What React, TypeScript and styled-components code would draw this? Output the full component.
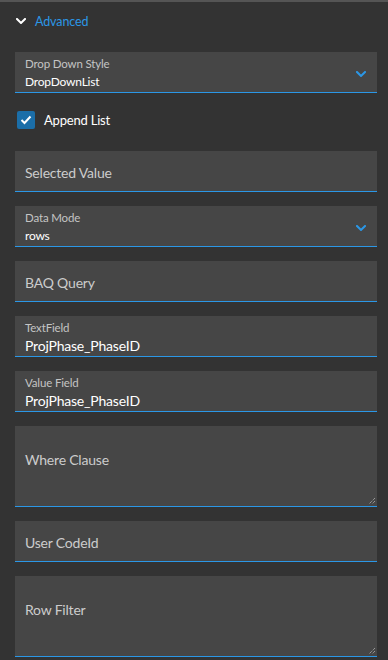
import styled, { createGlobalStyle } from "styled-components"

const GlobalStyle = createGlobalStyle`
  html, body {
    margin: 0;
    padding: 0;
    background: #333333;
  }
  body {
    font-family: Lato, "Noto Sans", sans-serif;
  }
`

type FieldProps = {
  label?: string
  value?: string
  placeholder?: string
  select?: boolean
  tall?: boolean
}

function Chevron({ color, size }: { color: string; size: number }) {
  return (
    <svg width={size} height={size * 0.6} viewBox="0 0 10 6" fill="none">
      <path d="M1 1l4 4 4-4" stroke={color} strokeWidth="2" strokeLinecap="square" />
    </svg>
  )
}

function Field({ label, value, placeholder, select, tall }: FieldProps) {
  return (
    <Box $tall={tall}>
      {label ? (
        <Filled>
          <Label>{label}</Label>
          <Value $small={select}>{value}</Value>
        </Filled>
      ) : (
        <Placeholder $tall={tall}>{placeholder}</Placeholder>
      )}
      {select && (
        <Arrow>
          <Chevron color="#2b97e6" size={10} />
        </Arrow>
      )}
      {tall && (
        <Grip>
          <svg width="8" height="8" viewBox="0 0 8 8">
            <path d="M7 1L1 7M7 4L4 7" stroke="#bbbbbb" strokeWidth="1" strokeDasharray="1 1" />
          </svg>
        </Grip>
      )}
    </Box>
  )
}

export default function App() {
  return (
    <>
      <GlobalStyle />
      <Panel>
        <Header>
          <Chevron color="#ffffff" size={10} />
          <HeaderText>Advanced</HeaderText>
        </Header>
        <Fields>
          <Field label="Drop Down Style" value="DropDownList" select />
          <CheckRow>
            <CheckBox>
              <svg width="12" height="10" viewBox="0 0 12 10" fill="none">
                <path d="M1.5 5l3 3 6-6.5" stroke="#ffffff" strokeWidth="2" />
              </svg>
            </CheckBox>
            <CheckLabel>Append List</CheckLabel>
          </CheckRow>
          <Field placeholder="Selected Value" />
          <Gap />
          <Field label="Data Mode" value="rows" select />
          <Gap />
          <Field placeholder="BAQ Query" />
          <Gap />
          <Field label="TextField" value="ProjPhase_PhaseID" />
          <Gap />
          <Field label="Value Field" value="ProjPhase_PhaseID" />
          <Gap />
          <Field placeholder="Where Clause" tall />
          <Gap />
          <Field placeholder="User CodeId" />
          <Gap />
          <Field placeholder="Row Filter" tall />
        </Fields>
      </Panel>
    </>
  )
}

const Panel = styled.div`
  width: 388px;
  height: 660px;
  overflow: hidden;
  background: #333333;
  border-top: 2px solid #555555;
  box-sizing: border-box;
`

const Header = styled.div`
  display: flex;
  align-items: center;
  gap: 9px;
  height: 38px;
  padding-left: 16px;
`

const HeaderText = styled.span`
  color: #2b97e6;
  font-size: 12.5px;
  letter-spacing: -0.1px;
`

const Fields = styled.div`
  display: flex;
  flex-direction: column;
  padding: 12px 11px 0 15px;
`

const Box = styled.div<{ $tall?: boolean }>`
  position: relative;
  display: flex;
  align-items: ${p => (p.$tall ? "flex-start" : "center")};
  height: ${p => (p.$tall ? 56 : 40)}px;
  box-sizing: content-box;
  background: #464646;
  border-bottom: 1px solid #2b97e6;
  padding: ${p => (p.$tall ? "24px 10px 0" : "0 10px")};
`

const Filled = styled.div`
  display: flex;
  flex-direction: column;
  justify-content: center;
  gap: 2px;
  padding-top: 2px;
`

const Label = styled.div`
  color: #c4c4c4;
  font-size: 11.5px;
  letter-spacing: -0.15px;
  line-height: 15px;
`

const Value = styled.div<{ $small?: boolean }>`
  color: #ffffff;
  font-size: ${p => (p.$small ? 12 : 14)}px;
  letter-spacing: -0.2px;
  line-height: 18px;
`

const Placeholder = styled.div<{ $tall?: boolean }>`
  color: #cccccc;
  font-size: 14px;
  letter-spacing: -0.2px;
  line-height: 20px;
  padding-top: ${p => (p.$tall ? 0 : 3)}px;
`

const Arrow = styled.div`
  position: absolute;
  right: 11px;
  top: 19px;
  display: flex;
`

const Grip = styled.div`
  position: absolute;
  right: 1px;
  bottom: 1px;
  display: flex;
`

const Gap = styled.div`
  height: 14px;
`

const CheckRow = styled.div`
  display: flex;
  align-items: center;
  gap: 9px;
  height: 54px;
  padding: 0 0 4px 2px;
`

const CheckBox = styled.div`
  width: 18px;
  height: 18px;
  border-radius: 2px;
  background: #1b6ea8;
  display: flex;
  align-items: center;
  justify-content: center;
`

const CheckLabel = styled.span`
  color: #ffffff;
  font-size: 13px;
  letter-spacing: -0.2px;
`
